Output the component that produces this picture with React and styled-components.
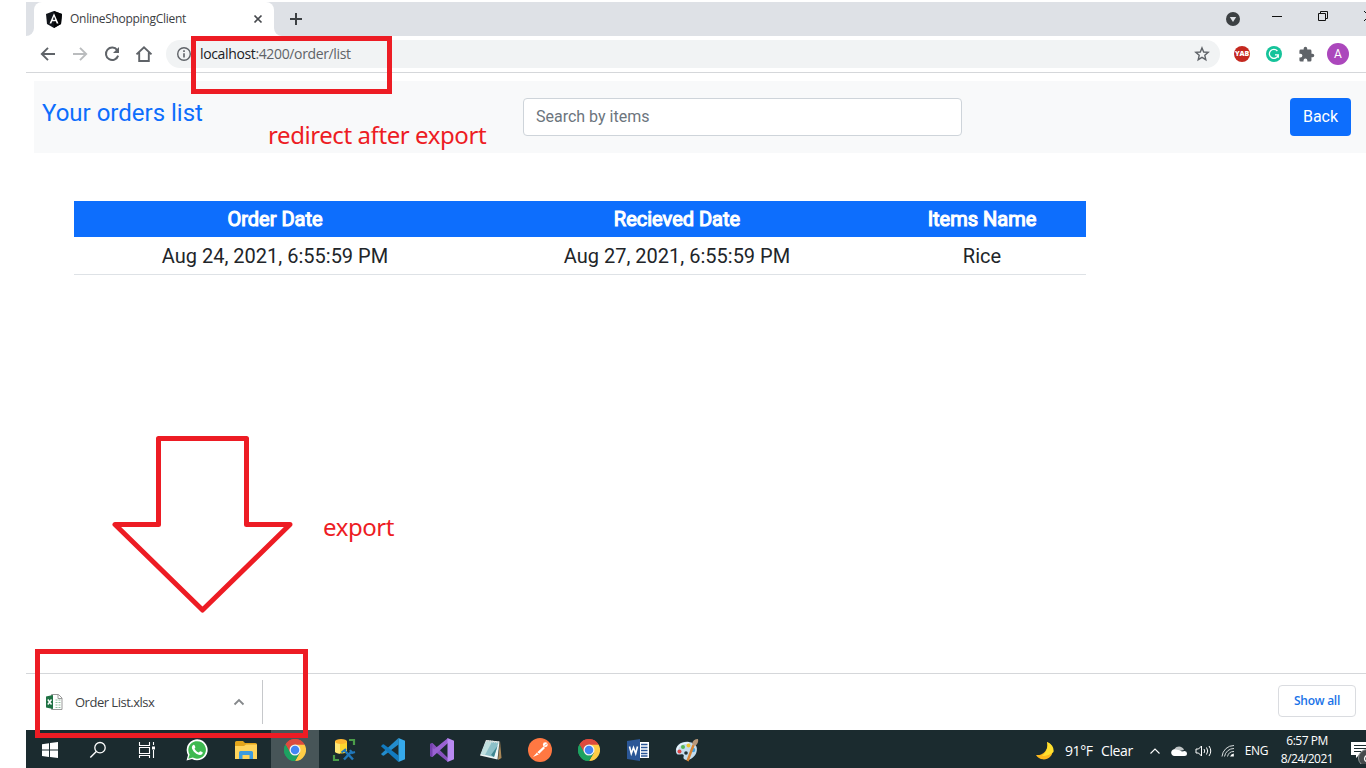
import React from "react";
import styled, { createGlobalStyle } from "styled-components";

const UI = `"Open Sans", "Noto Sans", sans-serif`;
const RED = "#ed1c24";

const GlobalStyle = createGlobalStyle`
  *, *::before, *::after { box-sizing: border-box; }
  body { margin: 0; background: #fff; overflow: hidden; }
  svg { display: block; flex: none; }
`;

const Screen = styled.div`
  position: relative;
  width: 1366px;
  height: 768px;
  padding: 2px 0 0 26px;
  display: flex;
  flex-direction: column;
  overflow: hidden;
  background: #fff;
  font-family: ${UI};
`;

const Label = styled.span`
  font-family: ${UI};
  font-size: ${(p) => p.$size || 12}px;
  font-weight: ${(p) => p.$weight || 400};
  letter-spacing: ${(p) => p.$track || 0}px;
  color: ${(p) => p.$color || "#3c4043"};
  line-height: 18px;
  white-space: nowrap;
`;

/* Browser chrome */
const TabStrip = styled.header`
  height: 34px;
  flex: none;
  display: flex;
  background: #dee1e6;
`;
const TabLead = styled.div`
  width: 8px;
  background: #fff;
  &::before { content: ""; display: block; height: 34px; background: #dee1e6; border-bottom-right-radius: 8px; }
`;
const Tab = styled.div`
  width: 240px;
  height: 34px;
  padding: 0 10px 0 12px;
  display: flex;
  align-items: center;
  background: #fff;
  border-radius: 8px 8px 0 0;
  > span { margin-left: 8px; flex: 1; }
`;
const TabTail = styled(TabLead)`
  &::before { border-radius: 0 0 0 8px; }
`;
const NewTab = styled.button`
  border: 0;
  padding: 0;
  margin-left: 7px;
  background: none;
  display: flex;
  align-items: center;
`;
const WindowControls = styled.div`
  margin-left: auto;
  width: 140px;
  flex: none;
  display: flex;
  align-items: center;
  gap: 32px;
`;
const WindowButtons = styled.div`
  display: flex;
  gap: 36px;
  padding-bottom: 6px;
`;
const Toolbar = styled.nav`
  height: 37px;
  flex: none;
  padding-left: 13px;
  display: flex;
  align-items: center;
  border-bottom: 1px solid #d5d7da;
`;
const NavIcons = styled.div`
  display: flex;
  gap: 14px;
  width: 127px;
`;
const AddressBar = styled.div`
  width: 1054px;
  height: 28px;
  border-radius: 14px;
  padding: 0 10px;
  background: #f1f3f4;
  display: flex;
  align-items: center;
  > span { margin-left: 8px; flex: 1; }
  em { font-style: normal; color: #202124; }
`;
const Extensions = styled.div`
  margin-left: 14px;
  display: flex;
  align-items: center;
  gap: 16px;
`;
const YabBadge = styled.span`
  width: 16px;
  height: 16px;
  border-radius: 50%;
  background: #c4281f;
  color: #fff;
  font: 800 7px/16px ${UI};
  letter-spacing: -0.1px;
  text-align: center;
`;
const Avatar = styled.span`
  width: 22px;
  height: 22px;
  margin-left: -4px;
  border-radius: 50%;
  background: #ab47bc;
  color: #fff;
  font: 400 12px/22px Roboto, sans-serif;
  text-align: center;
`;

/* Web page */
const Page = styled.main`
  flex: 1;
  padding: 8px 0 0 8px;
  font-family: Roboto, sans-serif;
`;
const PageHeader = styled.div`
  height: 72px;
  padding: 17px 15px 0 8px;
  display: flex;
  background: #f8f9fa;
`;
const Title = styled.h1`
  margin: 0;
  width: 481px;
  font-size: 24px;
  line-height: 31px;
  font-weight: 400;
  color: #0d6efd;
`;
const SearchInput = styled.input`
  width: 439px;
  height: 38px;
  padding: 5px 12px 7px;
  border: 1px solid #ced4da;
  border-radius: 4px;
  background: #fff;
  font: 400 16px/24px Roboto, sans-serif;
  &::placeholder { color: #6c757d; opacity: 1; }
`;
const BackButton = styled.button`
  margin-left: auto;
  width: 61px;
  height: 38px;
  padding: 0;
  border: 0;
  border-radius: 4px;
  background: #0d6efd;
  color: #fff;
  font: 400 16px/24px Roboto, sans-serif;
`;
const OrdersTable = styled.table`
  width: 1012px;
  margin: 48px 0 0 40px;
  table-layout: fixed;
  border-collapse: separate;
  border-spacing: 0;
  font-size: 20px;
  line-height: 30px;
  text-align: center;
  color: #212529;
  th { height: 36px; padding: 0; background: #0d6efd; color: #fff; font-weight: 400; -webkit-text-stroke: 1.1px #fff; }
  td { height: 38px; padding: 1px 0 0; border-bottom: 1px solid #dee2e6; }
`;

/* Downloads */
const DownloadBar = styled.section`
  height: 57px;
  flex: none;
  border-top: 1px solid #d5d7da;
  display: flex;
  align-items: center;
  padding: 0 10px 0 19px;
`;
const Download = styled.div`
  width: 218px;
  height: 44px;
  padding-right: 17px;
  border-right: 1px solid #c6c8cb;
  display: flex;
  align-items: center;
  > span { flex: 1; margin-left: 12px; }
`;
const ShowAll = styled.button`
  margin: 0 0 2px auto;
  width: 78px;
  height: 32px;
  padding: 0;
  border: 1px solid #dadce0;
  border-radius: 4px;
  background: #fff;
  display: grid;
  place-items: center;
`;

/* Taskbar */
const Taskbar = styled.footer`
  height: 38px;
  flex: none;
  display: flex;
  background: #1b2b2f;
  overflow: hidden;
`;
const TaskSlot = styled.div`
  width: ${(p) => p.$w || 49}px;
  flex: none;
  height: 38px;
  padding-top: 2px;
  display: grid;
  place-items: center;
  background: ${(p) => (p.$active ? "linear-gradient(90deg, transparent 1px, #475558 1px)" : "transparent")};
`;
const Tray = styled.div`
  margin-left: auto;
  width: 332px;
  padding: 3px 0 0 2px;
  flex: none;
  display: flex;
  align-items: center;
`;
const TrayItem = styled.div`
  width: ${(p) => p.$w}px;
  flex: none;
  display: flex;
  justify-content: ${(p) => p.$align || "center"};
`;
const Clock = styled.div`
  width: 72px;
  flex: none;
  padding-bottom: 1px;
  display: flex;
  flex-direction: column;
  align-items: center;
`;
const Notices = styled.div`
  width: 28px;
  margin-left: 8px;
  flex: none;
`;

/* Markup drawn over the window */
const Frame = styled.div`
  position: absolute;
  left: ${(p) => p.$x}px;
  top: ${(p) => p.$y}px;
  width: ${(p) => p.$w}px;
  height: ${(p) => p.$h}px;
  border: 5px solid ${RED};
  pointer-events: none;
`;
const Note = styled.div`
  position: absolute;
  left: ${(p) => p.$x}px;
  top: ${(p) => p.$y}px;
  color: ${RED};
  font: 400 24px/32px "Noto Sans", sans-serif;
  letter-spacing: -0.42px;
  white-space: nowrap;
`;
const ArrowMark = styled.svg`
  position: absolute;
  left: 110px;
  top: 434px;
`;

const Icon = ({ w = 18, h = w, box = `0 0 ${w} ${h}`, children }) => (
  <svg width={w} height={h} viewBox={box} fill="none">{children}</svg>
);

const AngularIcon = () => (
  <Icon w={16} h={18}>
    <path d="M8 1 16 4 15 14 8 18 1 14 0 4Z" fill="#11151b" />
    <path d="M8 1 16 4 15 14 8 18Z" fill="#050608" />
    <path d="M8 3.2 3.5 13.5H5.3L6.2 11.2H9.8L10.7 13.5H12.5ZM8 6.6 9.2 9.7H6.8Z" fill="#fff" fillRule="evenodd" />
  </Icon>
);
const CloseIcon = () => <Icon w={12}><path d="M2.5 2.5 9.5 9.5M9.5 2.5 2.5 9.5" stroke="#46494d" strokeWidth="1.7" /></Icon>;
const PlusIcon = () => <Icon w={14}><path d="M7 1V13M1 7H13" stroke="#3c4043" strokeWidth="2" /></Icon>;
const BackIcon = () => <Icon><path d="M16 9H3M9 2.8 2.8 9 9 15.2" stroke="#5f6368" strokeWidth="1.9" /></Icon>;
const ForwardIcon = () => <Icon><path d="M2 9H15M9 2.8 15.2 9 9 15.2" stroke="#babcbe" strokeWidth="1.9" /></Icon>;
const ReloadIcon = () => (
  <Icon>
    <path d="M14.2 5.2A6.2 6.2 0 1 0 15.1 10.6" stroke="#5f6368" strokeWidth="2" />
    <path d="M16 2V8H10Z" fill="#5f6368" />
  </Icon>
);
const HomeIcon = () => <Icon><path d="M1.5 9.4 9 2.2 16.5 9.4M4.2 7.5V16H13.8V7.5" stroke="#5f6368" strokeWidth="1.9" /></Icon>;
const InfoIcon = () => (
  <Icon w={16}>
    <circle cx="8" cy="8" r="6.3" stroke="#5f6368" strokeWidth="1.4" />
    <path d="M8 7.2V11.5M8 4.3V5.9" stroke="#5f6368" strokeWidth="1.6" />
  </Icon>
);
const StarIcon = () => <Icon w={16}><path d="M8 1.9 9.7 6 14.2 6.4 10.8 9.3 11.8 13.7 8 11.4 4.2 13.7 5.2 9.3 1.8 6.4 6.3 6Z" stroke="#5f6368" strokeWidth="1.4" /></Icon>;
const MenuDotIcon = () => <Icon w={14}><circle cx="7" cy="7" r="7" fill="#3c4043" /><path d="M3.8 5H10.2L7 10Z" fill="#dee1e6" /></Icon>;
const MinimizeIcon = () => <Icon w={10}><path d="M0 5.5H10" stroke="#111" /></Icon>;
const RestoreIcon = () => <Icon w={10}><path d="M.5 2.5H7.5V9.5H.5ZM2.5 2.5V.5H9.5V7.5H7.5" stroke="#111" /></Icon>;
const WindowCloseIcon = () => <Icon w={10}><path d="M0 0 10 10M10 0 0 10" stroke="#111" /></Icon>;
const GrammarlyIcon = () => (
  <Icon w={16}>
    <circle cx="8" cy="8" r="8" fill="#15c39a" />
    <path d="M11.4 5A4.500 4.500 0 1 0 12.300 8.800H9M12.300 8.800V11.800" stroke="#fff" strokeWidth="1.300" />
  </Icon>
);
const PuzzleIcon = () => (
  <Icon w={17} box="0 0 24 24">
    <path d="M20.5 11H19V7a2 2 0 0 0-2-2h-4V3.500a2.500 2.500 0 0 0-5 0V5H4a2 2 0 0 0-2 2v3.800h1.500a2.700 2.700 0 0 1 0 5.400H2V20a2 2 0 0 0 2 2h3.800v-1.500a2.700 2.700 0 0 1 5.400 0V22H17a2 2 0 0 0 2-2v-4h1.500a2.500 2.500 0 0 0 0-5Z" fill="#5f6368" />
  </Icon>
);
const ExcelIcon = () => (
  <Icon w={18}>
    <path d="M6.500 1.500H13.500L17 5V16.500H6.500Z" fill="#fff" stroke="#9a9a9a" />
    <path d="M13 1.500V5.500H17" stroke="#9a9a9a" />
    <path d="M10.500 7H12.500M13.500 7H15.500M10.500 9.500H12.500M13.500 9.500H15.500M10.500 12H12.500M13.500 12H15.500M10.500 14.500H12.500M13.500 14.500H15.500" stroke="#8fbf9f" />
    <path d="M1 3.500 8 2V16L1 14.500Z" fill="#1f7244" />
    <path d="M2.800 6.500 6.500 11.500M6.500 6.500 2.800 11.500" stroke="#fff" strokeWidth="1.400" />
  </Icon>
);
const CaretIcon = ({ color = "#85888b", w = 12, sw = 1.8 }) => (
  <Icon w={w} h={8} box="0 0 12 8"><path d="M1.500 6.500 6 2 10.500 6.500" stroke={color} strokeWidth={sw} /></Icon>
);
const WindowsIcon = () => <Icon w={16}><path d="M0 2.300 7 1.200V7.600H0ZM8 1.100 16 0V7.600H8ZM0 8.500H7V15L0 14ZM8 8.500H16V16L8 15Z" fill="#fff" /></Icon>;
const SearchIcon = () => <Icon><circle cx="11" cy="6.700" r="5.200" stroke="#fff" strokeWidth="1.300" /><path d="M7.300 10.500 1.300 16.500" stroke="#fff" strokeWidth="1.400" /></Icon>;
const TaskViewIcon = () => (
  <Icon w={18} h={16}>
    <path d="M1.500 0V3.500H11.500V0M1.500 16V13.500H11.500V16M1.500 5.500H11.500V11.500H1.500ZM15.500 0V3M15.500 8V16" stroke="#fff" strokeWidth="1.100" />
    <path d="M14 4.500H17V7.500H14Z" fill="#fff" />
  </Icon>
);
const WhatsAppIcon = () => (
  <Icon w={22}>
    <path d="M.5 21.500 2 16A10.500 10.500 0 1 1 6 20Z" fill="#fff" />
    <path d="M2.300 19.700 3.600 15.500A8.800 8.800 0 1 1 6.800 18.600Z" fill="#3fb950" />
    <path d="M7.300 6C8.200 5.500 8.600 6 9.300 8 9.600 9 8.300 9.300 8.700 10 9.800 11.900 11 12.800 12.600 13.400 13.300 13.600 13.700 12 14.400 12.200L16.700 13.300C17 14.800 15.500 16.100 13.900 16 10.500 15.700 7.300 12.800 6.100 9.800 5.500 8.200 6.300 6.500 7.300 6Z" fill="#fff" />
  </Icon>
);
const FolderIcon = () => (
  <Icon w={22} h={18}>
    <path d="M0 1.500Q0 0 1.500 0H8L10 2H20.500Q22 2 22 3.500V7H0Z" fill="#e3a51b" />
    <path d="M0 5 9 5 11 3.500H22V18H0Z" fill="#ffd45c" />
    <path d="M4 18V11.500Q4 10 5.500 10H16.500Q18 10 18 11.500V18H14.500V14H7.500V18Z" fill="#3d9be0" />
  </Icon>
);
const ChromeIcon = () => (
  <Icon w={22} box="0 0 48 48">
    <path d="M24 24 3.200 12A24 24 0 0 1 44.800 12Z" fill="#dd4b3e" />
    <path d="M24 24V48A24 24 0 0 1 3.200 12L13.600 30Z" fill="#1da261" />
    <path d="M24 12H44.800A24 24 0 0 1 24 48L34.400 30Z" fill="#ffcd46" />
    <path d="M24 12 24 24 13.600 30 3.200 12Z" fill="#1da261" />
    <path d="M3.200 12A24 24 0 0 1 44.800 12H24A12 12 0 0 0 13.600 18L13.600 30Z" fill="#dd4b3e" />
    <path d="M3.200 12 13.600 30A12 12 0 0 0 24 36L34.400 30 24 48A24 24 0 0 1 3.200 12Z" fill="#1da261" />
    <circle cx="24" cy="24" r="12" fill="#f4f4f4" />
    <circle cx="24" cy="24" r="9.300" fill="#4285f4" />
  </Icon>
);
const DataToolsIcon = () => (
  <Icon w={24}>
    <path d="M17 2H22V7M2 17V22H7" stroke="#4b9d49" strokeWidth="2.200" />
    <path d="M3 3V14Q9 17 15 14V3Z" fill="#ffd52e" />
    <path d="M3 3V14Q5 15.500 8 15.700V4Z" fill="#ffe777" />
    <ellipse cx="9" cy="3.500" rx="6" ry="2.500" fill="#ffb62f" />
    <path d="M12 21.500 20 13M12.500 12.500 21 21.500" stroke="#2177b9" strokeWidth="2.500" />
    <path d="M9.500 14.500 14 11M18 12 20 15 23 14" stroke="#2177b9" strokeWidth="2" />
  </Icon>
);
const VSCodeIcon = () => (
  <Icon w={24}>
    <path d="M17.500 0V6.500L3 17.500Q2 18 1 17L0 16 17.500 0Z" fill="#238dcd" />
    <path d="M17.500 24V17.500L3 6.500Q2 6 1 7L0 8.300 17.500 24Z" fill="#127bc0" />
    <path d="M17.500 0 24 2.800V21.200L17.500 24Z" fill="#35a9eb" />
  </Icon>
);
const VisualStudioIcon = () => (
  <Icon w={24}>
    <path d="M0 6 2.500 5 18 20V24L4 12.800 0 17Z" fill="#8751bd" />
    <path d="M0 18 2.500 19 18 5V0L4 11.200 0 7Z" fill="#9a62d2" />
    <path d="M0 6 2.500 5V19L0 18Z" fill="#7540ae" />
    <path d="M17.500 0 24 2.800V21.200L17.500 24Z" fill="#b98af2" />
  </Icon>
);
const NotepadIcon = () => (
  <Icon w={24}>
    <path d="M21 3 22.500 20 19 22Z" fill="#a98757" />
    <path d="M7 2 20.500 3.500 18.500 21.500 1 17.500Z" fill="#eef5f4" />
    <path d="M7.500 3 19.500 4.500 15 19 2 16Z" fill="#8cc0c8" />
    <path d="M7.500 3 13 3.700 6 17 2 16Z" fill="#c1e0df" />
    <path d="M12 17 18.500 8 15 19Z" fill="#3d8590" />
    <path d="M7 3 20 4.500" stroke="#d9dcda" strokeWidth="2" strokeDasharray="1 1" />
  </Icon>
);
const PostmanIcon = () => (
  <Icon w={24}>
    <circle cx="12" cy="12" r="12" fill="#ff7842" />
    <path d="M5 19 9 14.500 15.500 8.500 17 10 10.500 16.500Z" fill="#fff" />
    <circle cx="17.300" cy="6.700" r="2.400" fill="#fff" />
    <path d="M17 7.500 19 5.500M9 14.500 11 16" stroke="#ff7842" />
  </Icon>
);
const WordIcon = () => (
  <Icon w={22}>
    <path d="M11 3H22V19H11Z" fill="#fff" />
    <path d="M14 5.500H20.500M14 8.500H20.500M14 11.500H20.500M14 14.500H20.500M14 17H20.500" stroke="#2b5797" strokeWidth="1.300" />
    <path d="M0 2 13 0V22L0 20Z" fill="#2b5797" />
    <path d="M2.500 7.500 4.300 14.500 6.500 8.500 8.700 14.500 10.500 7.500" stroke="#fff" strokeWidth="1.600" />
  </Icon>
);
const PaintIcon = () => (
  <Icon w={24}>
    <path d="M1 14C0 7 7 3 14 4 21 5 23 9 21.500 14 20 20 12 24 9 21 7.500 19 10 17.500 8 16.500 5 15.500 2 18.500 1 14Z" fill="#c4dced" />
    <path d="M2 12C3 7 8 4.500 14 5" stroke="#edf6fc" strokeWidth="1.500" />
    <circle cx="8" cy="9" r="2" fill="#55b654" />
    <circle cx="13.500" cy="7.500" r="2" fill="#efc42f" />
    <circle cx="4.500" cy="13.500" r="2" fill="#dd4545" />
    <circle cx="18" cy="12" r="2.300" fill="#48a3df" />
    <circle cx="11" cy="15" r="1.800" fill="#203237" />
    <path d="M12.500 23 18.500 7" stroke="#d78436" strokeWidth="2.400" />
    <path d="M17 6Q18 1 23 1 24 5 20 8Z" fill="#b9987a" />
  </Icon>
);
const MoonIcon = () => (
  <Icon w={18}>
    <path d="M11 0A9 9 0 1 1 0 13 10 10 0 0 0 11 0Z" fill="#ffb81c" />
    <path d="M11 0A9 9 0 0 1 17.500 10Q13 14 6 14 13 8 11 0Z" fill="#ffe02e" />
  </Icon>
);
const CloudIcon = () => (
  <Icon w={16} h={11}>
    <path d="M3 7A5 5 0 0 1 11 2.500 4 4 0 0 1 13 5Z" fill="#bfc4c5" />
    <path d="M3.500 11A3.400 3.400 0 1 1 5 4.500Q9 5 11 6.500 16 4.800 16 8.500 16 11 13.500 11Z" fill="#fff" />
  </Icon>
);
const SpeakerIcon = () => (
  <Icon w={17} h={14}>
    <path d="M1 5H3.500L6.500 2V12L3.500 9H1Z" stroke="#fff" />
    <path d="M9 5Q10.500 7 9 9M11.500 3.500Q14 7 11.500 10.500M14 2Q17.500 7 14 12" stroke="#fff" />
  </Icon>
);
const WifiIcon = () => (
  <Icon w={14}>
    <path d="M1 12.500A12 12 0 0 1 13 1.500M3.500 12.500A9.500 9.500 0 0 1 13 4.500M6.500 12.500A6.500 6.500 0 0 1 13 7.500" stroke="#d6dbdc" />
    <path d="M9 12.500Q10 9.800 12.800 9.500V12.500Z" fill="#fff" />
  </Icon>
);
const NotificationIcon = () => (
  <Icon w={28} h={26}>
    <path d="M0 4H17V17H8L5 20V17H0Z" fill="#fff" />
    <path d="M3 7.500H17M3 10.500H17M3 13.500H10" stroke="#1b2b2f" />
    <circle cx="16" cy="20" r="8.500" fill="#454a4c" stroke="#929899" />
    <path d="M17 16.500Q13.500 18 13.500 21 14 24 17 23.500" stroke="#fff" strokeWidth="1.300" />
  </Icon>
);

const ORDERS = [{ ordered: "Aug 24, 2021, 6:55:59 PM", received: "Aug 27, 2021, 6:55:59 PM", items: "Rice" }];
const PINNED = [WhatsAppIcon, FolderIcon, ChromeIcon, DataToolsIcon, VSCodeIcon, VisualStudioIcon, NotepadIcon, PostmanIcon, ChromeIcon, WordIcon, PaintIcon];

export default function App() {
  return (
    <>
      <GlobalStyle />
      <Screen>
        <TabStrip>
          <TabLead />
          <Tab>
            <AngularIcon />
            <Label $track={-0.28}>OnlineShoppingClient</Label>
            <CloseIcon />
          </Tab>
          <TabTail />
          <NewTab aria-label="New tab"><PlusIcon /></NewTab>
          <WindowControls>
            <MenuDotIcon />
            <WindowButtons><MinimizeIcon /><RestoreIcon /><WindowCloseIcon /></WindowButtons>
          </WindowControls>
        </TabStrip>
        <Toolbar>
          <NavIcons><BackIcon /><ForwardIcon /><ReloadIcon /><HomeIcon /></NavIcons>
          <AddressBar>
            <InfoIcon />
            <Label $size={14} $track={-0.36} $color="#5f6368"><em>localhost</em>:4200/order/list</Label>
            <StarIcon />
          </AddressBar>
          <Extensions>
            <YabBadge>YAB</YabBadge>
            <GrammarlyIcon />
            <PuzzleIcon />
            <Avatar>A</Avatar>
          </Extensions>
        </Toolbar>
        <Page>
          <PageHeader>
            <Title>Your orders list</Title>
            <SearchInput placeholder="Search by items" />
            <BackButton>Back</BackButton>
          </PageHeader>
          <OrdersTable>
            <colgroup><col width="402" /><col width="402" /><col width="208" /></colgroup>
            <thead>
              <tr><th>Order Date</th><th>Recieved Date</th><th>Items Name</th></tr>
            </thead>
            <tbody>
              {ORDERS.map((o) => (
                <tr key={o.ordered}><td>{o.ordered}</td><td>{o.received}</td><td>{o.items}</td></tr>
              ))}
            </tbody>
          </OrdersTable>
        </Page>
        <DownloadBar>
          <Download>
            <ExcelIcon />
            <Label $size={13} $track={-0.5}>Order List.xlsx</Label>
            <CaretIcon />
          </Download>
          <ShowAll><Label $color="#1a73e8" $weight={600} $track={-0.25}>Show all</Label></ShowAll>
        </DownloadBar>
        <Taskbar>
          <TaskSlot $w={48}><WindowsIcon /></TaskSlot>
          <TaskSlot $w={48}><SearchIcon /></TaskSlot>
          <TaskSlot $w={50}><TaskViewIcon /></TaskSlot>
          {PINNED.map((Pin, i) => <TaskSlot key={i} $active={i === 2}><Pin /></TaskSlot>)}
          <Tray>
            <TrayItem $w={29} $align="flex-start"><MoonIcon /></TrayItem>
            <TrayItem $w={36} $align="flex-start"><Label $size={14} $color="#fff" $track={-0.4}>91°F</Label></TrayItem>
            <TrayItem $w={44} $align="flex-start"><Label $size={14} $color="#fff" $track={-0.4}>Clear</Label></TrayItem>
            <TrayItem $w={20}><CaretIcon color="#fff" w={16} sw={1.1} /></TrayItem>
            <TrayItem $w={28}><CloudIcon /></TrayItem>
            <TrayItem $w={21}><SpeakerIcon /></TrayItem>
            <TrayItem $w={28}><WifiIcon /></TrayItem>
            <TrayItem $w={29}><Label $color="#fff" $track={-0.3}>ENG</Label></TrayItem>
            <Clock>
              <Label $color="#fff" $track={-0.5}>6:57 PM</Label>
              <Label $color="#fff" $track={-0.5}>8/24/2021</Label>
            </Clock>
            <Notices><NotificationIcon /></Notices>
          </Tray>
        </Taskbar>

        <Frame $x={191} $y={36} $w={201} $h={58} />
        <Frame $x={35} $y={649} $w={273} $h={89} />
        <ArrowMark width="186" height="182" fill="none">
          <path d="M48.500 4.500H136.500V90.500H180L92.500 176 5 90.500H48.500Z" stroke={RED} strokeWidth="5" strokeLinejoin="round" />
        </ArrowMark>
        <Note $x={268} $y={119}>redirect after export</Note>
        <Note $x={323} $y={511}>export</Note>
      </Screen>
    </>
  );
}
